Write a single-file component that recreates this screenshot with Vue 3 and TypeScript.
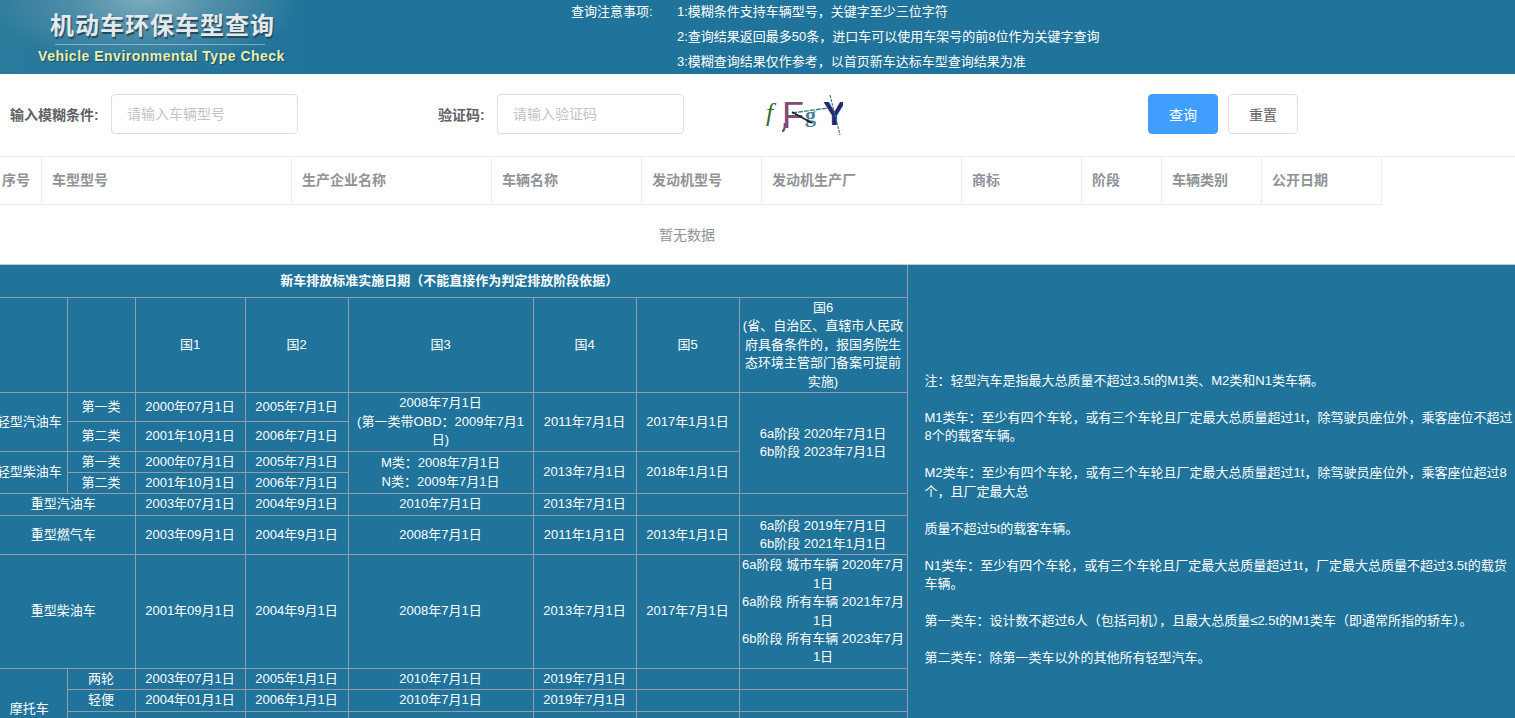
<script setup lang="ts">
const notes: string[] = [
  '1:模糊条件支持车辆型号，关键字至少三位字符',
  '2:查询结果返回最多50条，进口车可以使用车架号的前8位作为关键字查询',
  '3:模糊查询结果仅作参考，以首页新车达标车型查询结果为准',
]
const columns: { label: string; cls: string }[] = [
  { label: '序号', cls: 'w50' },
  { label: '车型型号', cls: 'w250' },
  { label: '生产企业名称', cls: 'w200' },
  { label: '车辆名称', cls: 'w150' },
  { label: '发动机型号', cls: 'w120' },
  { label: '发动机生产厂', cls: 'w200' },
  { label: '商标', cls: 'w120' },
  { label: '阶段', cls: 'w80' },
  { label: '车辆类别', cls: 'w100' },
  { label: '公开日期', cls: 'w120' },
]
const remark = `注：轻型汽车是指最大总质量不超过3.5t的M1类、M2类和N1类车辆。

M1类车：至少有四个车轮，或有三个车轮且厂定最大总质量超过1t，除驾驶员座位外，乘客座位不超过8个的载客车辆。

M2类车：至少有四个车轮，或有三个车轮且厂定最大总质量超过1t，除驾驶员座位外，乘客座位超过8个，且厂定最大总

质量不超过5t的载客车辆。

N1类车：至少有四个车轮，或有三个车轮且厂定最大总质量超过1t，厂定最大总质量不超过3.5t的载货车辆。

第一类车：设计数不超过6人（包括司机），且最大总质量≤2.5t的M1类车（即通常所指的轿车）。

第二类车：除第一类车以外的其他所有轻型汽车。`
</script>

<template>
  <div class="page">
    <header class="top">
      <div class="logo">
        <div class="logo-cn">机动车环保车型查询</div>
        <div class="logo-rule"></div>
        <div class="logo-en">Vehicle Environmental Type Check</div>
      </div>
      <div class="notice">
        <div class="notice-title">查询注意事项:</div>
        <div class="notice-list">
          <div v-for="n in notes" :key="n" class="notice-line">{{ n }}</div>
        </div>
      </div>
    </header>

    <section class="search">
      <label class="field-label first">输入模糊条件:</label>
      <input class="field" placeholder="请输入车辆型号" />
      <label class="field-label second">验证码:</label>
      <input class="field" placeholder="请输入验证码" />
      <svg class="captcha" width="80" height="42" viewBox="0 0 80 42">
        <text x="3" y="28" class="cap-f">f</text>
        <text x="19" y="35" class="cap-j">F</text>
        <path d="M22 30 Q22 38 19 38" stroke="#7d4d78" stroke-width="2.5" fill="none" />
        <text x="42" y="29" class="cap-g">g</text>
        <text x="60" y="32" class="cap-y">Y</text>
        <path d="M29 20 L65 15" stroke="#2f8a72" stroke-width="1.4" stroke-dasharray="5 1" fill="none" />
        <path d="M29 19 L49 30" stroke="#15202b" stroke-width="1.5" fill="none" />
        <path d="M67 2 L77 42" stroke="#4a6a70" stroke-width="1.1" stroke-dasharray="3 1" fill="none" />
      </svg>
      <button class="btn primary">查询</button>
      <button class="btn">重置</button>
    </section>

    <div class="shift">
      <section class="result">
        <div class="result-head">
          <div v-for="c in columns" :key="c.label" class="th" :class="c.cls">{{ c.label }}</div>
        </div>
        <div class="empty">暂无数据</div>
      </section>

      <section class="info">
        <table class="std">
          <colgroup>
            <col class="c1" /><col class="c2" /><col class="c3" /><col class="c4" />
            <col class="c5" /><col class="c6" /><col class="c7" /><col class="c8" />
          </colgroup>
          <tbody>
            <tr class="h32"><td colspan="8" class="title">新车排放标准实施日期（不能直接作为判定排放阶段依据）</td></tr>
            <tr class="h95">
              <td></td><td></td><td>国1</td><td>国2</td><td>国3</td><td>国4</td><td>国5</td>
              <td>国6<br />(省、自治区、直辖市人民政府具备条件的，报国务院生态环境主管部门备案可提前实施)</td>
            </tr>
            <tr class="h29">
              <td rowspan="2">轻型汽油车</td><td>第一类</td><td>2000年07月1日</td><td>2005年7月1日</td>
              <td rowspan="2">2008年7月1日<br />(第一类带OBD：2009年7月1日)</td>
              <td rowspan="2">2011年7月1日</td><td rowspan="2">2017年1月1日</td>
              <td rowspan="4">6a阶段 2020年7月1日<br />6b阶段 2023年7月1日</td>
            </tr>
            <tr class="h30"><td>第二类</td><td>2001年10月1日</td><td>2006年7月1日</td></tr>
            <tr class="h21">
              <td rowspan="2">轻型柴油车</td><td>第一类</td><td>2000年07月1日</td><td>2005年7月1日</td>
              <td rowspan="2">M类：2008年7月1日<br />N类：2009年7月1日</td>
              <td rowspan="2">2013年7月1日</td><td rowspan="2">2018年1月1日</td>
            </tr>
            <tr class="h21"><td>第二类</td><td>2001年10月1日</td><td>2006年7月1日</td></tr>
            <tr class="h22">
              <td colspan="2">重型汽油车</td><td>2003年07月1日</td><td>2004年9月1日</td><td>2010年7月1日</td>
              <td>2013年7月1日</td><td></td><td></td>
            </tr>
            <tr class="h39">
              <td colspan="2">重型燃气车</td><td>2003年09月1日</td><td>2004年9月1日</td><td>2008年7月1日</td>
              <td>2011年1月1日</td><td>2013年1月1日</td>
              <td>6a阶段 2019年7月1日<br />6b阶段 2021年1月1日</td>
            </tr>
            <tr class="h114">
              <td colspan="2">重型柴油车</td><td>2001年09月1日</td><td>2004年9月1日</td><td>2008年7月1日</td>
              <td>2013年7月1日</td><td>2017年7月1日</td>
              <td>6a阶段 城市车辆 2020年7月1日<br />6a阶段 所有车辆 2021年7月1日<br />6b阶段 所有车辆 2023年7月1日</td>
            </tr>
            <tr class="h21">
              <td rowspan="3">摩托车</td><td>两轮</td><td>2003年07月1日</td><td>2005年1月1日</td><td>2010年7月1日</td>
              <td>2019年7月1日</td><td></td><td></td>
            </tr>
            <tr class="h22">
              <td>轻便</td><td>2004年01月1日</td><td>2006年1月1日</td><td>2010年7月1日</td>
              <td>2019年7月1日</td><td></td><td></td>
            </tr>
            <tr class="h39"><td></td><td></td><td></td><td></td><td></td><td></td><td></td></tr>
            <tr class="h22"><td colspan="2"></td><td></td><td></td><td></td><td></td><td></td><td></td></tr>
          </tbody>
        </table>
        <aside class="remark">{{ remark }}</aside>
      </section>
    </div>
  </div>
</template>

<style>
html,
body {
  margin: 0;
  height: 718px;
  overflow: hidden;
  background: #fff;
}
</style>

<style scoped>
.page {
  width: 1515px;
  height: 718px;
  overflow: hidden;
  font-family: "Liberation Sans", "Noto Sans CJK SC", sans-serif;
  font-size: 13px;
}

.top {
  height: 74px;
  background: #20739a;
  display: flex;
  color: #fff;
}
.logo {
  width: 310px;
  height: 74px;
  box-sizing: border-box;
  padding-top: 11px;
  text-align: center;
  background:
    radial-gradient(ellipse 160px 66px at 145px 0, #7cabbd 0%, rgba(90, 148, 172, 0.8) 45%, rgba(32, 115, 154, 0) 100%),
    linear-gradient(90deg, #2a7a9c 0%, #20739a 100%);
}
.logo-cn {
  width: 325px;
  font-size: 24px;
  line-height: 30px;
  font-weight: 700;
  letter-spacing: 1px;
  color: #e4e9eb;
  text-shadow: 1px 2px 1px #24485a;
}
.logo-rule {
  width: 210px;
  height: 1px;
  margin: 3px 0 0 55px;
  background: rgba(190, 220, 232, 0.55);
}
.logo-en {
  width: 323px;
  margin-top: 2px;
  font-size: 14px;
  line-height: 19px;
  font-weight: 700;
  letter-spacing: 0.5px;
  color: #e6efb4;
  text-shadow: 1px 1px 1px #27485a;
}
.notice {
  display: flex;
  margin-left: 261px;
  margin-top: -1.5px;
}
.notice-title {
  width: 106px;
  line-height: 25px;
  font-size: 13px;
}
.notice-line {
  height: 25px;
  line-height: 25px;
}

.search {
  height: 82px;
  box-sizing: border-box;
  padding-bottom: 2px;
  display: flex;
  align-items: center;
}
.field-label {
  font-size: 14px;
  font-weight: 700;
  color: #606266;
  white-space: nowrap;
}
.field-label.first {
  margin-left: 10px;
  width: 101px;
}
.field-label.second {
  margin-left: 140px;
  width: 59px;
}
.field {
  width: 187px;
  height: 40px;
  box-sizing: border-box;
  border: 1px solid #dcdfe6;
  border-radius: 4px;
  padding: 0 15px;
  font: inherit;
  font-size: 14px;
  color: #606266;
  outline: none;
  background: #fff;
}
.field::placeholder {
  color: #c0c4cc;
}
.captcha {
  margin-left: 79px;
  margin-right: 305px;
}
.cap-f {
  font-family: "Liberation Serif", serif;
  font-style: italic;
  font-size: 26px;
  fill: #3c6b2e;
}
.cap-j {
  font-family: "Liberation Sans", sans-serif;
  font-size: 36px;
  fill: #7d4d78;
}
.cap-g {
  font-family: "Liberation Serif", serif;
  font-weight: 700;
  font-size: 22px;
  fill: #4f7f93;
}
.cap-y {
  font-family: "Liberation Sans", sans-serif;
  font-size: 34px;
  font-weight: 700;
  fill: #1d2a78;
}
.btn {
  width: 70px;
  height: 40px;
  margin-right: 10px;
  padding: 0;
  box-sizing: border-box;
  border: 1px solid #dcdfe6;
  border-radius: 4px;
  background: #fff;
  color: #606266;
  font: inherit;
  font-size: 14px;
}
.btn.primary {
  background: #409eff;
  border-color: #409eff;
  color: #fff;
}

.shift {
  margin-left: -8px;
  width: 1523px;
}
.result {
  height: 109px;
  box-sizing: border-box;
  border-top: 1px solid #ebeef5;
  border-bottom: 1px solid #c9c9c9;
}
.result-head {
  display: flex;
  width: 1390px;
  height: 48px;
  box-sizing: border-box;
  border-bottom: 1px solid #ebeef5;
}
.th {
  box-sizing: border-box;
  padding-left: 10px;
  border-right: 1px solid #ebeef5;
  font-size: 14px;
  font-weight: 700;
  color: #909399;
  line-height: 47px;
  white-space: nowrap;
}
.w50 { width: 50px; }
.w80 { width: 80px; }
.w100 { width: 100px; }
.w120 { width: 120px; }
.w150 { width: 150px; }
.w200 { width: 200px; }
.w250 { width: 250px; }
.empty {
  width: 1390px;
  height: 60px;
  line-height: 60px;
  text-align: center;
  font-size: 14px;
  color: #909399;
}

.info {
  display: flex;
  align-items: center;
  background: #20739a;
  color: #fff;
}
.std {
  flex: none;
  table-layout: fixed;
  width: 915px;
  border-collapse: collapse;
  color: #fff;
}
.c1 { width: 75px; }
.c2 { width: 68px; }
.c3 { width: 110px; }
.c4 { width: 103px; }
.c5 { width: 185px; }
.c6 { width: 103px; }
.c7 { width: 103px; }
.c8 { width: 168px; }
.std td {
  border: 1px solid #9a9aa6;
  padding: 1px 1px 0;
  line-height: 18.4px;
  text-align: center;
  vertical-align: middle;
  box-sizing: border-box;
}
.std tr:first-child td {
  border-top: 0;
}
.std td:first-child {
  border-left: 0;
}
.title {
  font-weight: 700;
  color: #fff;
}
.h21 { height: 21px; }
.h22 { height: 22px; }
.h29 { height: 29px; }
.h30 { height: 30px; }
.h32 { height: 32px; }
.h39 { height: 39px; }
.h95 { height: 95px; }
.h114 { height: 114px; }

.remark {
  flex: 1;
  box-sizing: border-box;
  padding: 2px 0 0 17px;
  line-height: 18.45px;
  white-space: pre-wrap;
  color: #fff;
}
</style>
